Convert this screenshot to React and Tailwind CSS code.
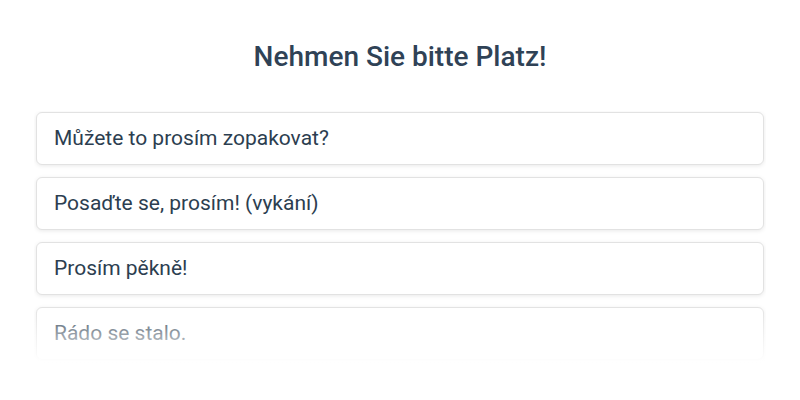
const phrases = [
  'Můžete to prosím zopakovat?',
  'Posaďte se, prosím! (vykání)',
  'Prosím pěkně!',
  'Rádo se stalo.',
]

export default function App() {
  return (
    <div className="w-[800px] h-[400px] bg-white font-['Roboto',sans-serif] text-[#2c3e50]">
      <h1 className="pt-[38px] text-center text-[28px] leading-[38px] font-medium text-[#2f4256]">Nehmen Sie bitte Platz!</h1>
      <div className="relative mt-[35px] mx-[34px] h-[252px] overflow-hidden">
        <div className="flex flex-col gap-[12px] px-[2px] pt-px">
          {phrases.map((p) => (
            <div
              key={p}
              className="bg-white border border-[#e2e2e2] rounded-[6px] shadow-[0_1px_4px_rgba(0,0,0,0.09)] px-[17px] py-[12px] text-[21px] leading-[27px]"
            >
              {p}
            </div>
          ))}
        </div>
        <div className="absolute inset-x-0 bottom-0 h-[58px] bg-gradient-to-b from-white/0 to-white pointer-events-none" />
      </div>
    </div>
  )
}
